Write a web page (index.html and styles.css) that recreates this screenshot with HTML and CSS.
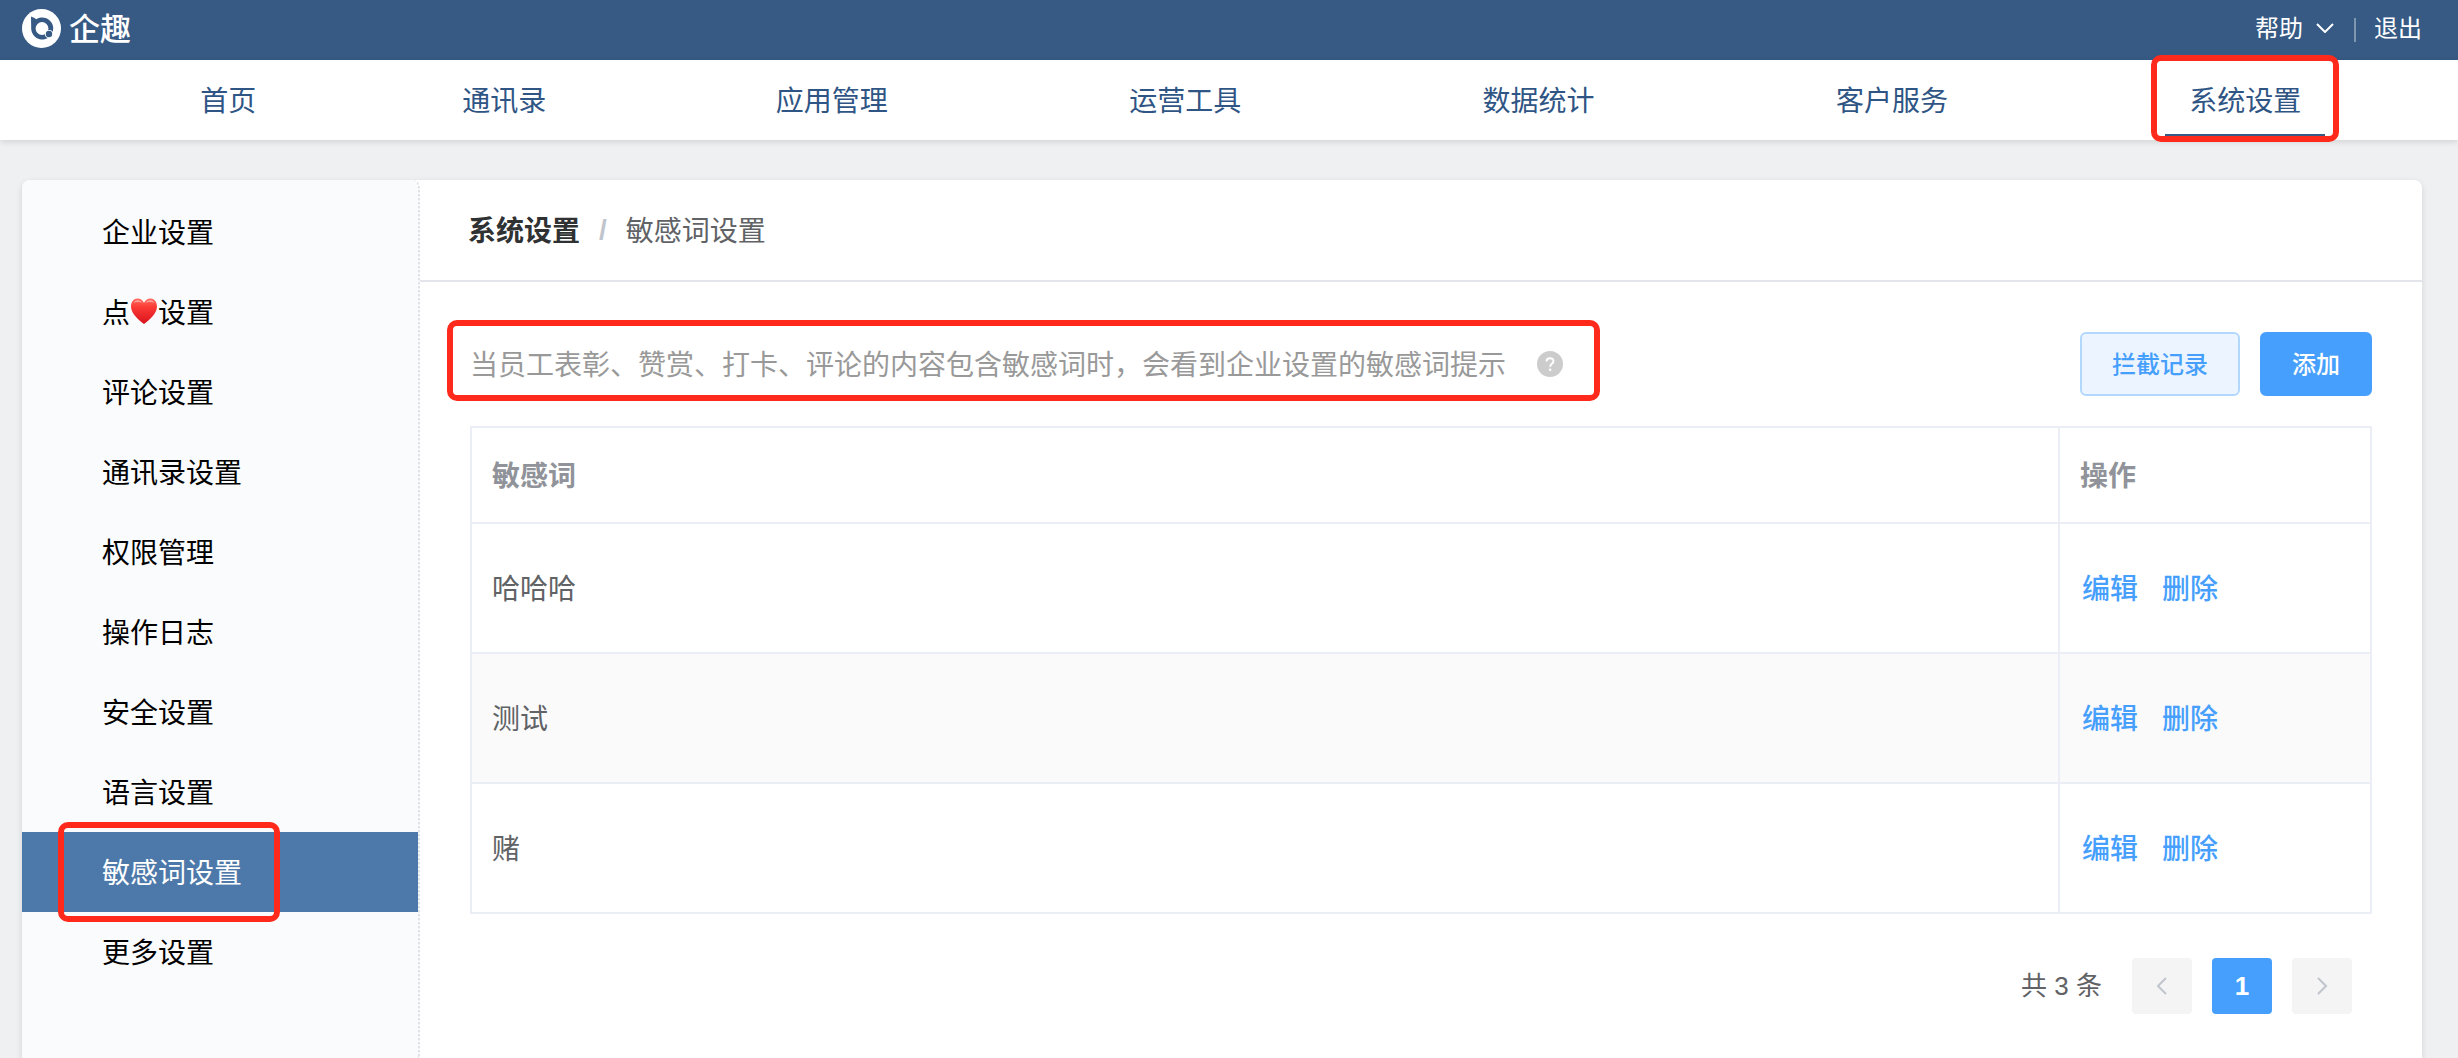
FILE: index.html
```html
<!DOCTYPE html>
<html lang="zh-CN">
<head>
<meta charset="utf-8">
<meta name="viewport" content="width=device-width, initial-scale=1">
<title>敏感词设置 - 企趣</title>
<link rel="stylesheet" href="styles.css">
</head>
<body>
<header class="topbar">
  <a class="brand" href="#">
    <svg class="brand-mark" viewBox="0 0 39 39" aria-hidden="true">
      <circle cx="19.5" cy="19.5" r="19.5" fill="#fff"/>
      <path d="M9 7.5 L13 9.2 Q14 10.5 14.5 10 A11 11 0 1 1 9.2 20 Z" fill="#365a84"/>
      <circle cx="20" cy="19.5" r="6.4" fill="#fff"/>
      <circle cx="27" cy="25" r="4.1" fill="#fff"/>
      <circle cx="27" cy="25" r="3.2" fill="#365a84"/>
    </svg>
    <span>企趣</span>
  </a>
  <div class="account">
    <button class="help" type="button">帮助
      <svg class="help-arrow" viewBox="0 0 18 10" aria-hidden="true"><path d="M1 1 L9 9 L17 1"/></svg>
    </button>
    <span class="divider"></span>
    <a class="logout" href="#">退出</a>
  </div>
</header>

<nav class="mainnav">
  <ul class="mainnav-list">
    <li><a href="#">首页</a></li>
    <li><a href="#">通讯录</a></li>
    <li><a href="#">应用管理</a></li>
    <li><a href="#">运营工具</a></li>
    <li><a href="#">数据统计</a></li>
    <li><a href="#">客户服务</a></li>
    <li><a class="current marked" href="#">系统设置</a></li>
  </ul>
</nav>

<div class="panel">
  <aside class="sidebar">
    <ul class="menu">
      <li><a href="#">企业设置</a></li>
      <li><a href="#">点<svg class="heart" viewBox="0 0 28 28" role="img" aria-label="❤️"><defs><linearGradient id="heart-fill" x1="0" y1="0" x2="0" y2="1"><stop offset="0" stop-color="#ff6a5c"/><stop offset=".35" stop-color="#fb3a35"/><stop offset="1" stop-color="#d8121c"/></linearGradient></defs><path d="M14 26 C9 22 1 16 1 8.500 C1 3.500 4 .5 7.500 .5 C10.500 .5 13 2.500 14 5 C15 2.500 17.500 .5 20.500 .5 C24 .5 27 3.500 27 8.500 C27 16 19 22 14 26 Z" fill="url(#heart-fill)"/><path d="M3.500 5 Q5 1.800 8 2 Q11 2.300 12.500 5 Q8 2.800 3.500 5 Z M15.500 5 Q17 2.200 20 2 Q23 1.900 24.500 5 Q20 2.800 15.500 5 Z" fill="#fff" fill-opacity=".4"/></svg>设置</a></li>
      <li><a href="#">评论设置</a></li>
      <li><a href="#">通讯录设置</a></li>
      <li><a href="#">权限管理</a></li>
      <li><a href="#">操作日志</a></li>
      <li><a href="#">安全设置</a></li>
      <li><a href="#">语言设置</a></li>
      <li><a class="active" href="#"><span class="marked">敏感词设置</span></a></li>
      <li><a href="#">更多设置</a></li>
    </ul>
  </aside>

  <main class="content">
    <div class="breadcrumb">
      <a class="crumb-root" href="#">系统设置</a>
      <span class="crumb-sep">/</span>
      <span>敏感词设置</span>
    </div>

    <section class="body">
      <div class="toolbar">
        <p class="tip marked">
          <span>当员工表彰、赞赏、打卡、评论的内容包含敏感词时，会看到企业设置的敏感词提示</span>
          <svg class="tip-icon" viewBox="0 0 26 26" aria-hidden="true">
            <circle cx="13" cy="13" r="13" fill="#ccc"/>
            <path d="M9.500 10.500 C9.500 8.300 11 7.200 13 7.200 C15.100 7.200 16.500 8.500 16.500 10.300 C16.500 12.800 13.100 12.900 13.100 15.800" fill="none" stroke="#fff" stroke-width="1.900"/>
            <circle cx="13.100" cy="18.800" r="1.300" fill="#fff"/>
          </svg>
        </p>
        <div class="actions">
          <button class="btn btn-plain" type="button">拦截记录</button>
          <button class="btn btn-primary" type="button">添加</button>
        </div>
      </div>

      <table class="words">
        <thead>
          <tr><th scope="col">敏感词</th><th class="col-ops" scope="col">操作</th></tr>
        </thead>
        <tbody>
          <tr><td>哈哈哈</td><td><div class="ops"><a href="#">编辑</a><a href="#">删除</a></div></td></tr>
          <tr><td>测试</td><td><div class="ops"><a href="#">编辑</a><a href="#">删除</a></div></td></tr>
          <tr><td>赌</td><td><div class="ops"><a href="#">编辑</a><a href="#">删除</a></div></td></tr>
        </tbody>
      </table>

      <div class="pagination">
        <span class="total">共 3 条</span>
        <button class="page" type="button" disabled aria-label="上一页"><svg class="page-arrow" viewBox="0 0 12 20" aria-hidden="true"><path d="M10 2 L2 10 L10 18"/></svg></button>
        <button class="page page-on" type="button">1</button>
        <button class="page" type="button" disabled aria-label="下一页"><svg class="page-arrow" viewBox="0 0 12 20" aria-hidden="true"><path d="M2 2 L10 10 L2 18"/></svg></button>
      </div>
    </section>
  </main>
</div>
</body>
</html>
```
FILE: styles.css
```css
* {
  box-sizing: border-box;
}

body {
  display: flex;
  flex-direction: column;
  min-height: 100vh;
  margin: 0;
  background: #eff0f2;
  color: #606266;
  font-family: "Noto Sans", "Noto Sans CJK SC", sans-serif;
  font-size: 28px;
  line-height: 40px;
}

a {
  color: inherit;
  text-decoration: none;
}

ul {
  margin: 0;
  padding: 0;
  list-style: none;
}

button {
  padding: 0;
  border: 0;
  background: none;
  color: inherit;
  font: inherit;
}

/* red frame that calls out an element */
.marked {
  position: relative;
}

.marked::after {
  content: "";
  position: absolute;
  border: 6px solid #ff2a1c;
  border-radius: 10px;
  pointer-events: none;
}

/* top bar */
.topbar {
  display: flex;
  align-items: center;
  justify-content: space-between;
  height: 60px;
  padding: 0 36px 4px 22px;
  background: #365a84;
  color: #fff;
}

.brand {
  display: flex;
  align-items: center;
  gap: 8px;
  font-size: 31px;
  font-weight: 500;
}

.brand-mark {
  width: 39px;
  height: 39px;
}

.account {
  display: flex;
  align-items: center;
  font-size: 24px;
}

.help {
  display: flex;
  align-items: center;
  gap: 13px;
}

.help-arrow {
  width: 18px;
  height: 10px;
  fill: none;
  stroke: #fff;
  stroke-width: 2;
}

.divider {
  width: 2px;
  height: 24px;
  margin: 4px 18px 0 20px;
  background: #7f96b0;
}

/* main navigation */
.mainnav {
  position: relative;
  padding: 0 36px 0 103px;
  background: #fff;
  box-shadow: 0 2px 6px rgba(0, 0, 0, 0.12);
  color: #2f5585;
}

.mainnav-list {
  display: table;
  width: 100%;
}

.mainnav-list li {
  display: table-cell;
  height: 80px;
  padding: 0 16px;
  text-align: center;
  vertical-align: top;
}

.mainnav-list a {
  display: inline-block;
  height: 78px;
  padding: 0 24px;
  line-height: 80px;
}

.mainnav-list .current {
  border-bottom: 4px solid #365a84;
}

.current.marked::after {
  inset: -5px -14px -8px;
}

/* page panel */
.panel {
  display: flex;
  flex: 1;
  margin: 40px 36px 0 22px;
  border-radius: 8px 8px 0 0;
  background: #fff;
  box-shadow: 0 2px 6px rgba(0, 0, 0, 0.12);
}

.sidebar {
  flex: 0 0 398px;
  padding-top: 12px;
  border-right: 2px dotted #dcdfe6;
  border-radius: 8px 8px 0 0;
  background: #fafbfd;
  color: #000;
}

.menu a {
  display: flex;
  align-items: center;
  height: 80px;
  padding-left: 80px;
}

.menu .active {
  background: #4d79aa;
  color: #fff;
}

.menu .marked::after {
  inset: -30px -38px -30px -44px;
}

.heart {
  width: 28px;
  height: 28px;
}

.content {
  flex: 1;
  min-width: 0;
}

.breadcrumb {
  display: flex;
  align-items: center;
  gap: 19px;
  height: 102px;
  padding-left: 48px;
  border-bottom: 2px solid #e4e5ea;
}

.crumb-root {
  color: #303133;
  font-weight: 700;
}

.crumb-sep {
  color: #c0c4cc;
  font-family: "Liberation Sans", sans-serif;
  font-weight: 700;
}

.body {
  padding: 50px 50px 44px;
}

.toolbar {
  display: flex;
  align-items: center;
  justify-content: space-between;
}

.tip {
  display: flex;
  align-items: center;
  gap: 31px;
  margin: 0;
  color: #999;
}

.tip.marked::after {
  inset: -24px -37px -17px -23px;
}

.tip-icon {
  flex: none;
  width: 26px;
  height: 26px;
}

.actions {
  display: flex;
  flex: none;
  gap: 20px;
}

.btn {
  height: 64px;
  padding: 0 30px;
  border: 2px solid #479ffd;
  border-radius: 6px;
  font-size: 24px;
  font-weight: 500;
}

.btn-plain {
  border-color: #b3d8ff;
  background: #ecf5ff;
  color: #479ffd;
}

.btn-primary {
  background: #479ffd;
  color: #fff;
}

/* word table */
.words {
  width: 100%;
  margin-top: 30px;
  border: 2px solid #ebeef5;
  border-right-width: 0;
  border-bottom-width: 0;
  border-spacing: 0;
}

.words th,
.words td {
  padding: 0 20px;
  border-right: 2px solid #ebeef5;
  border-bottom: 2px solid #ebeef5;
  text-align: left;
}

.words th {
  height: 96px;
  color: #909399;
  font-weight: 700;
}

.words td {
  height: 130px;
}

.words tbody tr:nth-child(even) {
  background: #fafafa;
}

.words .col-ops {
  width: 312px;
}

.ops {
  display: flex;
  gap: 24px;
  padding-left: 2px;
  color: #479ffd;
  font-weight: 500;
}

/* pagination */
.pagination {
  display: flex;
  align-items: center;
  justify-content: flex-end;
  gap: 20px;
  margin-top: 44px;
  padding-right: 20px;
  font-family: "Liberation Sans", "Noto Sans CJK SC", sans-serif;
  font-size: 26px;
}

.total {
  margin-right: 10px;
}

.page {
  display: flex;
  align-items: center;
  justify-content: center;
  width: 60px;
  height: 56px;
  border-radius: 4px;
  background: #f4f4f5;
}

.page-on {
  background: #479ffd;
  color: #fff;
  font-weight: 700;
}

.page-arrow {
  width: 12px;
  height: 20px;
  fill: none;
  stroke: #c0c4cc;
  stroke-width: 2;
}
```
